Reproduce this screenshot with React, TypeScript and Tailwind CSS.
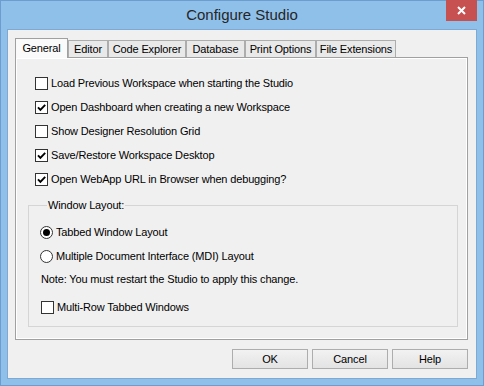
import React from "react";

const tabs = [
  { label: "General", w: "w-[53px]", active: true },
  { label: "Editor", w: "w-[40px]" },
  { label: "Code Explorer", w: "w-[78px]" },
  { label: "Database", w: "w-[59px]" },
  { label: "Print Options", w: "w-[71px]" },
  { label: "File Extensions", w: "w-[80px]" },
];

const options = [
  { label: "Load Previous Workspace when starting the Studio", checked: false },
  { label: "Open Dashboard when creating a new Workspace", checked: true },
  { label: "Show Designer Resolution Grid", checked: false },
  { label: "Save/Restore Workspace Desktop", checked: true },
  { label: "Open WebApp URL in Browser when debugging?", checked: true },
];

function CheckBox({ checked }: { checked?: boolean }) {
  return (
    <span className="flex h-[13px] w-[13px] shrink-0 items-center justify-center border border-[#333333] bg-white">
      {checked && (
        <svg width="11" height="11" viewBox="0 0 11 11">
          <path d="M2 5.3 4.4 7.8 9.2 2.8" fill="none" stroke="#000" strokeWidth="1.9" />
        </svg>
      )}
    </span>
  );
}

function Radio({ checked }: { checked?: boolean }) {
  return (
    <span className="flex h-[13px] w-[13px] shrink-0 items-center justify-center rounded-full border border-[#333333] bg-white">
      {checked && <span className="h-[7px] w-[7px] rounded-full bg-black" />}
    </span>
  );
}

function Row({ children, label }: { children: React.ReactNode; label: string }) {
  return (
    <div className="flex h-[13px] items-center gap-[3px]">
      {children}
      <span className="whitespace-nowrap">{label}</span>
    </div>
  );
}

export default function App() {
  return (
    <div className="flex h-[386px] w-[484px] flex-col border border-[#6c9dce] bg-[#8fc0ea] font-['Liberation_Sans',Arial,sans-serif] text-[11px] leading-[13px] tracking-[-0.15px] text-black">
      {/* Title bar */}
      <div className="relative flex h-[28px] shrink-0 items-center justify-center">
        <span className="text-[15px] leading-[18px] tracking-normal text-[#262626]">Configure Studio</span>
        <button className="absolute right-[6px] top-[-1px] flex h-[21px] w-[31px] items-center justify-center bg-[#c75050]">
          <svg width="9" height="9" viewBox="0 0 9 9">
            <path d="M1 1 8 8M8 1 1 8" stroke="#fff" strokeWidth="2" />
          </svg>
        </button>
      </div>

      {/* Client area */}
      <div className="mx-[6px] flex h-[350px] shrink-0 flex-col border border-[#7ea9d5] bg-[#f0f0f0]">
        {/* Tab strip */}
        <div className="flex h-[27px] items-end pl-[7px] pt-[8px]">
          {tabs.map((t) =>
            t.active ? (
              <div
                key={t.label}
                className={`${t.w} relative z-10 -mb-[1px] flex h-[20px] items-center justify-center border border-b-0 border-[#a0a0a0] bg-[#fafafa] pb-[1px]`}
              >
                {t.label}
              </div>
            ) : (
              <div
                key={t.label}
                className={`${t.w} flex h-[17px] items-center justify-center whitespace-nowrap border border-b-0 border-[#adadad] bg-[#e9e9e9] pt-[1px]`}
              >
                {t.label}
              </div>
            )
          )}
        </div>

        {/* Tab panel */}
        <div className="ml-[7px] h-[283px] w-[453px] border border-[#a0a0a0] bg-[#f0f0f0] shadow-[inset_0_0_0_1px_#ffffff]">
          <div className="flex flex-col gap-[11px] pl-[19px] pt-[19px]">
            {options.map((o) => (
              <Row key={o.label} label={o.label}>
                <CheckBox checked={o.checked} />
              </Row>
            ))}
          </div>

          <fieldset className="ml-[12px] mt-[13px] h-[128px] w-[430px] border border-[#d5d5d5] pl-[11px]">
            <legend className="ml-[7px] px-[1px] leading-[13px]">Window Layout:</legend>
            <div className="flex flex-col pt-[14px]">
              <Row label="Tabbed Window Layout">
                <Radio checked />
              </Row>
              <div className="mt-[11px]">
                <Row label="Multiple Document Interface (MDI) Layout">
                  <Radio />
                </Row>
              </div>
              <div className="ml-[1px] mt-[10px] whitespace-nowrap leading-[13px]">
                Note: You must restart the Studio to apply this change.
              </div>
              <div className="ml-[1px] mt-[15px]">
                <Row label="Multi-Row Tabbed Windows">
                  <CheckBox />
                </Row>
              </div>
            </div>
          </fieldset>
        </div>

        {/* Buttons */}
        <div className="flex justify-end gap-[4px] pr-[8px] pt-[9px]">
          {["OK", "Cancel", "Help"].map((b) => (
            <button
              key={b}
              className="flex h-[20px] w-[76px] items-center justify-center border border-[#adadad] bg-gradient-to-b from-[#f2f2f2] to-[#e3e3e3] text-[11px]"
            >
              {b}
            </button>
          ))}
        </div>
      </div>
    </div>
  );
}
